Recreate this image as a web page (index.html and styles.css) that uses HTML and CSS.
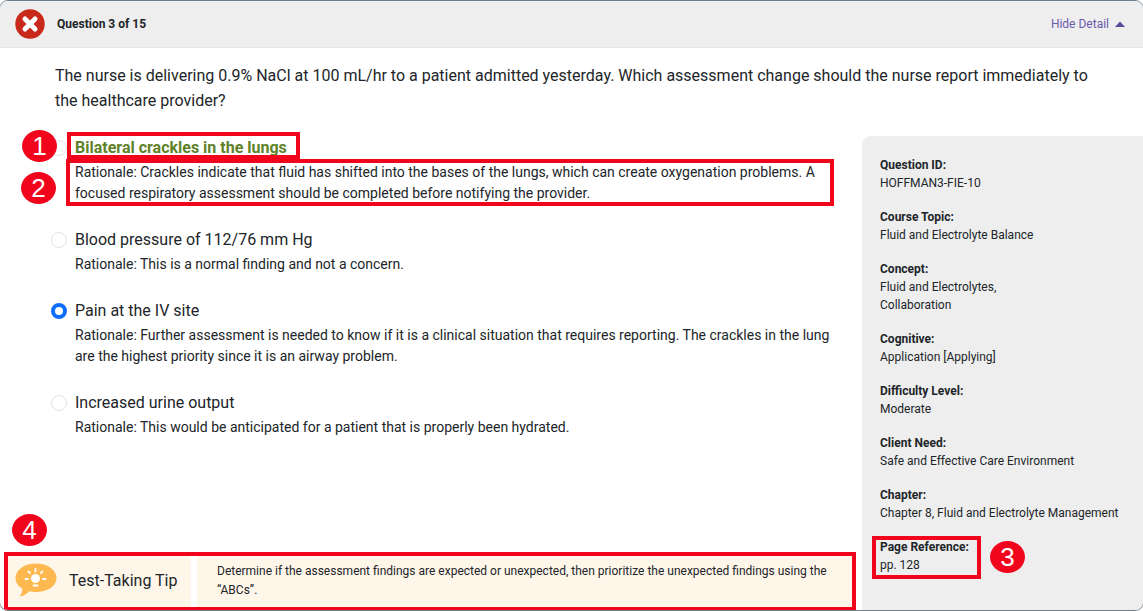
FILE: index.html
```html
<!DOCTYPE html>
<html lang="en">
<head>
<meta charset="utf-8">
<title>Question 3 of 15</title>
<link rel="stylesheet" href="styles.css">
</head>
<body>
<main class="card">
  <header class="head">
    <div class="head-left">
      <svg class="x-icon" width="30" height="30" viewBox="0 0 30 30"><circle cx="15" cy="15" r="14.7" fill="#c9291a"/><path d="M10 10L20 20M20 10L10 20" stroke="#fff" stroke-width="5" stroke-linecap="round"/></svg>
      <span class="q-count">Question 3 of 15</span>
    </div>
    <div class="hide">Hide Detail <svg class="caret" width="10" height="6" viewBox="0 0 10 6"><path d="M0 6L5 0.5L10 6Z" fill="#5b4b9e"/></svg></div>
  </header>
  <p class="question">The nurse is delivering 0.9% NaCl at 100 mL/hr to a patient admitted yesterday. Which assessment change should the nurse report immediately to the healthcare provider?</p>
  <div class="body">
    <section class="left">
      <div class="options">
        <div class="option">
          <span class="radio"></span>
          <div>
            <div class="title correct">Bilateral crackles in the lungs</div>
            <div class="rationale">Rationale: Crackles indicate that fluid has shifted into the bases of the lungs, which can create oxygenation problems. A focused respiratory assessment should be completed before notifying the provider.</div>
          </div>
        </div>
        <div class="option">
          <span class="radio"></span>
          <div>
            <div class="title">Blood pressure of 112/76 mm Hg</div>
            <div class="rationale">Rationale: This is a normal finding and not a concern.</div>
          </div>
        </div>
        <div class="option">
          <span class="radio selected"></span>
          <div>
            <div class="title">Pain at the IV site</div>
            <div class="rationale">Rationale: Further assessment is needed to know if it is a clinical situation that requires reporting. The crackles in the lung are the highest priority since it is an airway problem.</div>
          </div>
        </div>
        <div class="option">
          <span class="radio"></span>
          <div>
            <div class="title">Increased urine output</div>
            <div class="rationale">Rationale: This would be anticipated for a patient that is properly been hydrated.</div>
          </div>
        </div>
      </div>
      <div class="tip">
        <div class="tip-label">
          <svg width="42" height="34" viewBox="0 0 42 34"><path d="M21 0.500C32 0.500 41.500 6.500 41.500 15C41.500 23.500 32 29 21 29C18.500 29 16.500 28.700 14.500 28.200C11.500 31 8 33 4.500 33.500C6.500 31 7.500 28.500 7.300 25.500C3 23 0.500 19.500 0.500 15C0.500 6.500 10 0.500 21 0.500Z" fill="#fdb94f"/><circle cx="20.500" cy="15.500" r="4.500" fill="#fff"/><path d="M20.500 6V8.500M13.500 8.500L15 10M27.500 8.500L26 10M10.500 16H13M28 16H30.500M18.500 22.500H22.500" stroke="#fff" stroke-width="1.800" stroke-linecap="round"/></svg>
          <span>Test-Taking Tip</span>
        </div>
        <div class="tip-text">Determine if the assessment findings are expected or unexpected, then prioritize the unexpected findings using the “ABCs”.</div>
      </div>
    </section>
    <aside class="side">
      <div class="meta"><b>Question ID:</b>HOFFMAN3-FIE-10</div>
      <div class="meta"><b>Course Topic:</b>Fluid and Electrolyte Balance</div>
      <div class="meta"><b>Concept:</b>Fluid and Electrolytes,<br>Collaboration</div>
      <div class="meta"><b>Cognitive:</b>Application [Applying]</div>
      <div class="meta"><b>Difficulty Level:</b>Moderate</div>
      <div class="meta"><b>Client Need:</b>Safe and Effective Care Environment</div>
      <div class="meta"><b>Chapter:</b>Chapter 8, Fluid and Electrolyte Management</div>
      <div class="meta"><b>Page Reference:</b>pp. 128</div>
    </aside>
  </div>
  <div class="mark box1"></div>
  <div class="mark box2"></div>
  <div class="mark box3"></div>
  <div class="mark box4"></div>
  <span class="num n1">1</span>
  <span class="num n2">2</span>
  <span class="num n3">3</span>
  <span class="num n4">4</span>
</main>
</body>
</html>
```
FILE: styles.css
```css
* { box-sizing: border-box; }
html, body { margin: 0; height: 100%; }
body { background: #fff; font-family: Roboto, "Liberation Sans", sans-serif; color: #212529; overflow: hidden; }
.card { position: relative; height: 611px; margin: 0 -1px; display: flex; flex-direction: column; border: 1px solid #6f7f8a; border-radius: 9px; overflow: hidden; }
.head { height: 47px; flex: none; display: flex; align-items: center; justify-content: space-between; background: #eeeeee; border-bottom: 1px solid #e6e6e6; padding: 0 18px 0 15px; }
.head-left { display: flex; align-items: center; gap: 12px; }
.q-count { font-size: 12px; font-weight: 700; }
.hide { font-size: 12px; color: #6a5bab; display: flex; align-items: center; gap: 6px; }
.question { margin: 15px 40px 0 55px; font-size: 16px; line-height: 25px; flex: none; }
.body { flex: 1; display: flex; min-height: 0; margin-top: 14px; }
.left { width: 862px; flex: none; display: flex; flex-direction: column; }
.options { flex: 1; padding: 9px 28px 0 51px; }
.option { display: flex; gap: 8px; margin-bottom: 24px; }
.radio { flex: none; width: 16px; height: 16px; margin-top: 4px; border-radius: 50%; border: 1px solid #dfe2e6; background: #fff; }
.radio.selected { border: 4.5px solid #0d6efd; }
.title { font-size: 16px; line-height: 24px; margin-bottom: 2px; }
.title.correct { font-weight: 700; color: #5f8228; }
.rationale { font-size: 14px; line-height: 21px; }
.tip { flex: none; display: flex; height: 52px; margin: 0 7px 3px 7px; gap: 6px; }
.tip-label { width: 184px; flex: none; background: #fff6ea; display: flex; align-items: center; gap: 12px; padding: 0 0 2px 8px; font-size: 16px; }
.tip-text { flex: 1; background: #fff6ea; font-size: 12px; line-height: 19px; padding: 7px 20px 0; }
.side { flex: 1; margin-top: 9px; background: #eeeeee; border-top-left-radius: 9px; padding: 20px 18px 0; font-size: 12px; line-height: 18px; }
.meta { margin-bottom: 16px; }
.meta b { display: block; font-weight: 700; }
.mark { position: absolute; border: 4px solid #f0051c; }
.box1 { left: 67px; top: 131px; width: 233px; height: 27px; }
.box2 { left: 66px; top: 158px; width: 768px; height: 47px; }
.box3 { left: 872px; top: 535px; width: 109px; height: 43px; }
.box4 { left: 4px; top: 551px; width: 852px; height: 59px; }
.num { position: absolute; width: 35px; height: 32px; border-radius: 50%; background: #f0051c; color: #fff; font: 26px/32px "Liberation Sans", sans-serif; text-align: center; }
.n1 { left: 22px; top: 129px; }
.n2 { left: 21px; top: 171px; }
.n3 { left: 990px; top: 540px; }
.n4 { left: 12px; top: 513px; }
```
